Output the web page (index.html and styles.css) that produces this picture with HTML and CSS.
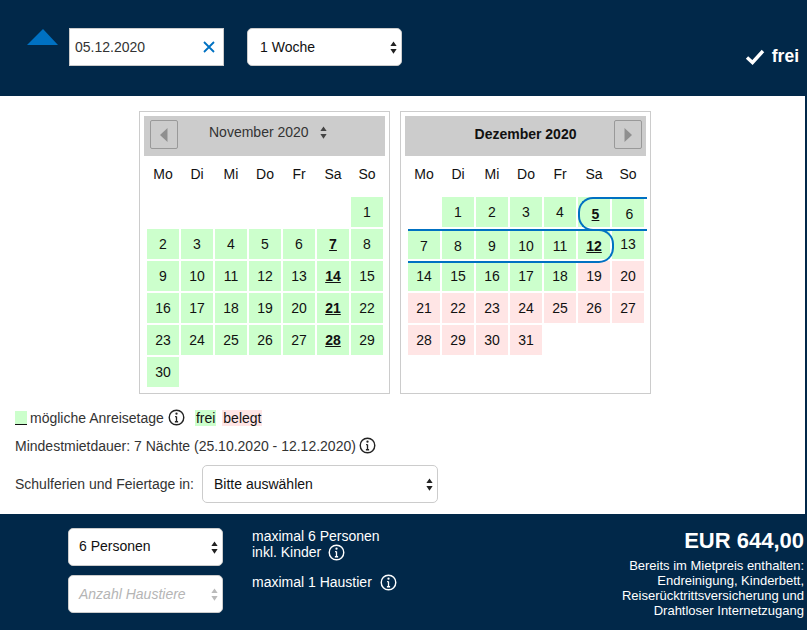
FILE: index.html
```html
<!DOCTYPE html>
<html lang="de">
<head>
<meta charset="utf-8">
<title>Verfügbarkeit</title>
<link rel="stylesheet" href="styles.css">
</head>
<body>
<div class="page">
  <header class="top">
    <span class="triangle"></span>
    <div class="date-field">
      <span>05.12.2020</span>
      <svg class="clear" viewBox="0 0 12 12"><path d="M1 1l10 10M11 1L1 11"/></svg>
    </div>
    <div class="select week"><span>1 Woche</span><svg class="arrows" viewBox="0 0 8 14"><path d="M4 0l3.600 5.400H.4zM4 14L.4 8.600h7.200z"/></svg></div>
    <div class="status">
      <svg class="check" viewBox="0 0 20 16"><path d="M2 8.500l5.500 5L18 2"/></svg>
      <span>frei</span>
    </div>
  </header>

  <main class="content">
    <div class="calendars">
      <section class="cal">
        <div class="cal-head">
          <span class="nav"><svg viewBox="0 0 8 14"><path d="M7.500 0v14L0 7z"/></svg></span>
          <span class="month-select">November 2020<svg class="arrows small" viewBox="0 0 8 14"><path d="M4 0l3.600 5.400H.4zM4 14L.4 8.600h7.200z"/></svg></span>
        </div>
        <div class="grid">
          <div class="dow">Mo</div><div class="dow">Di</div><div class="dow">Mi</div><div class="dow">Do</div><div class="dow">Fr</div><div class="dow">Sa</div><div class="dow">So</div>
          <div></div><div></div><div></div><div></div><div></div><div></div><div class="d f">1</div>
          <div class="d f">2</div><div class="d f">3</div><div class="d f">4</div><div class="d f">5</div><div class="d f">6</div><div class="d f a">7</div><div class="d f">8</div>
          <div class="d f">9</div><div class="d f">10</div><div class="d f">11</div><div class="d f">12</div><div class="d f">13</div><div class="d f a">14</div><div class="d f">15</div>
          <div class="d f">16</div><div class="d f">17</div><div class="d f">18</div><div class="d f">19</div><div class="d f">20</div><div class="d f a">21</div><div class="d f">22</div>
          <div class="d f">23</div><div class="d f">24</div><div class="d f">25</div><div class="d f">26</div><div class="d f">27</div><div class="d f a">28</div><div class="d f">29</div>
          <div class="d f">30</div>
        </div>
      </section>
      <section class="cal">
        <div class="cal-head">
          <span class="month-title">Dezember 2020</span>
          <span class="nav next"><svg viewBox="0 0 8 14"><path d="M.5 0v14L8 7z"/></svg></span>
        </div>
        <div class="grid">
          <div class="dow">Mo</div><div class="dow">Di</div><div class="dow">Mi</div><div class="dow">Do</div><div class="dow">Fr</div><div class="dow">Sa</div><div class="dow">So</div>
          <div></div><div class="d f">1</div><div class="d f">2</div><div class="d f">3</div><div class="d f">4</div><div class="d f a s s1 ra">5</div><div class="d f s s1">6</div>
          <div class="d f s rb">7</div><div class="d f s">8</div><div class="d f s">9</div><div class="d f s">10</div><div class="d f s">11</div><div class="d f a s">12</div><div class="d f">13</div>
          <div class="d f">14</div><div class="d f">15</div><div class="d f">16</div><div class="d f">17</div><div class="d f">18</div><div class="d b">19</div><div class="d b">20</div>
          <div class="d b">21</div><div class="d b">22</div><div class="d b">23</div><div class="d b">24</div><div class="d b">25</div><div class="d b">26</div><div class="d b">27</div>
          <div class="d b">28</div><div class="d b">29</div><div class="d b">30</div><div class="d b">31</div>
        </div>
      </section>
    </div>

    <div class="legend">
      <span class="swatch"></span>
      <span>mögliche Anreisetage</span>
      <svg class="info" viewBox="0 0 18 18"><circle cx="9" cy="9" r="7.700"/><path class="i-bar" d="M9 8v5.500M7.300 13.500h3.400M7.500 8H9"/><circle class="i-dot" cx="9" cy="5" r="1.200"/></svg>
      <span class="tag tag-free">frei</span>
      <span class="tag tag-busy">belegt</span>
    </div>
    <div class="minstay">
      <span>Mindestmietdauer: 7 Nächte (25.10.2020 - 12.12.2020)</span>
      <svg class="info" viewBox="0 0 18 18"><circle cx="9" cy="9" r="7.700"/><path class="i-bar" d="M9 8v5.500M7.300 13.500h3.400M7.500 8H9"/><circle class="i-dot" cx="9" cy="5" r="1.200"/></svg>
    </div>
    <div class="holidays">
      <span>Schulferien und Feiertage in:</span>
      <div class="select holiday"><span>Bitte auswählen</span><svg class="arrows" viewBox="0 0 8 14"><path d="M4 0l3.600 5.400H.4zM4 14L.4 8.600h7.200z"/></svg></div>
    </div>
  </main>

  <footer class="bottom">
    <div class="selects">
      <div class="select persons"><span>6 Personen</span><svg class="arrows" viewBox="0 0 8 14"><path d="M4 0l3.600 5.400H.4zM4 14L.4 8.600h7.200z"/></svg></div>
      <div class="select pets"><span>Anzahl Haustiere</span><svg class="arrows" viewBox="0 0 8 14"><path d="M4 0l3.600 5.400H.4zM4 14L.4 8.600h7.200z"/></svg></div>
    </div>
    <div class="limits">
      <div class="limit-a">maximal 6 Personen<br>inkl. Kinder
        <svg class="info light" viewBox="0 0 18 18"><circle cx="9" cy="9" r="7.700"/><path class="i-bar" d="M9 8v5.500M7.300 13.500h3.400M7.500 8H9"/><circle class="i-dot" cx="9" cy="5" r="1.200"/></svg>
      </div>
      <div class="limit-b">maximal 1 Haustier
        <svg class="info light" viewBox="0 0 18 18"><circle cx="9" cy="9" r="7.700"/><path class="i-bar" d="M9 8v5.500M7.300 13.500h3.400M7.500 8H9"/><circle class="i-dot" cx="9" cy="5" r="1.200"/></svg>
      </div>
    </div>
    <div class="price">
      <div class="amount">EUR 644,00</div>
      <div class="included">Bereits im Mietpreis enthalten:<br>Endreinigung, Kinderbett,<br>Reiserücktrittsversicherung und<br>Drahtloser Internetzugang</div>
    </div>
  </footer>
</div>
</body>
</html>
```

FILE: styles.css
```css
* { box-sizing: border-box; }
html, body { margin: 0; padding: 0; }
body {
  width: 807px;
  height: 630px;
  overflow: hidden;
  background: #012849;
  font-family: "Liberation Sans", Arial, sans-serif;
  font-size: 14px;
  color: #333;
}
.page { width: 807px; height: 630px; display: flex; flex-direction: column; }

.top {
  height: 96px;
  flex: none;
  background: #012849;
  display: flex;
  align-items: flex-start;
  padding: 28px 8px 0 27px;
}
.triangle {
  width: 0;
  height: 0;
  margin: 1px 10px 0 0;
  border-left: 16px solid transparent;
  border-right: 15px solid transparent;
  border-bottom: 16px solid #0071c2;
}
.date-field {
  width: 155px;
  height: 38px;
  margin-left: 1px;
  background: #fff;
  border: 1px solid #ccc;
  display: flex;
  align-items: center;
  justify-content: space-between;
  padding: 0 8px 0 5px;
  color: #333;
}
.clear { width: 12px; height: 12px; fill: none; stroke: #0071c2; stroke-width: 1.800; }

.select {
  background: #fff;
  border: 1px solid #ccc;
  border-radius: 5px;
  height: 38px;
  display: flex;
  align-items: center;
  justify-content: space-between;
  color: #111;
}
.arrows { width: 7px; height: 13px; fill: #222; flex: none; }
.week { width: 155px; margin-left: 23px; padding: 0 4px 0 12px; }
.status {
  margin-left: auto;
  margin-top: 18px;
  display: flex;
  align-items: center;
  gap: 7px;
  color: #fff;
  font-weight: 700;
  font-size: 17.500px;
}
.check { width: 20px; height: 16px; fill: none; stroke: #fff; stroke-width: 3.400; }

.content {
  width: 805px;
  height: 418px;
  flex: none;
  background: #fff;
  padding: 15px 0 0 15px;
}
.calendars { display: flex; gap: 10px; margin-left: 124px; }
.cal {
  width: 251px;
  height: 283px;
  border: 1px solid #ccc;
  padding: 4px;
}
.cal-head {
  height: 40px;
  background: #ccc;
  display: flex;
  align-items: flex-start;
  color: #333;
}
.nav {
  width: 28px;
  height: 29px;
  margin: 4px 0 0 6px;
  border: 1px solid #999;
  border-radius: 2px;
  display: flex;
  align-items: center;
  justify-content: center;
  flex: none;
}
.nav svg { width: 8px; height: 14px; fill: #8f8f8f; }
.nav.next { margin: 4px 4px 0 0; }
.month-select {
  margin: 8px 0 0 31px;
  display: flex;
  align-items: center;
  gap: 11px;
  height: 16px;
  font-size: 14px;
}
.arrows.small { width: 7px; height: 13px; fill: #444; }
.month-title {
  flex: 1;
  text-align: center;
  font-weight: 700;
  color: #111;
  margin-top: 10px;
  padding-left: 32px;
}

.grid {
  display: grid;
  grid-template-columns: repeat(7, 32px);
  grid-template-rows: 39px repeat(6, 30px);
  gap: 2px;
  margin-left: 3px;
  color: #111;
}
.dow { display: flex; align-items: center; justify-content: center; padding-bottom: 3px; }
.d { display: flex; align-items: center; justify-content: center; position: relative; }
.f { background: #ccffcc; }
.b { background: #ffe5e5; }
.a { font-weight: 700; text-decoration: underline; }
.s { padding-top: 4px; }
.s1 { padding-left: 3px; }
.ra::after, .rb::after {
  content: "";
  position: absolute;
  z-index: 1;
  top: 0;
  left: 0;
  height: 30px;
  border: 2px solid #0071c2;
  pointer-events: none;
}
.ra::after {
  width: 67px;
  border-right: 0;
  border-radius: 15px 0 0 15px;
}
.rb::after {
  width: 204px;
  border-left: 0;
  border-radius: 0 15px 15px 0;
}

.legend {
  display: flex;
  align-items: center;
  height: 18px;
  margin-top: 15px;
}
.swatch {
  width: 12px;
  height: 14px;
  background: #ccffcc;
  border-bottom: 1px solid #111;
  margin-right: 3px;
}
.info { width: 17px; height: 17px; fill: none; stroke: #222; stroke-width: 1.500; flex: none; }
.info .i-dot { fill: #222; stroke: none; }
.info .i-bar { stroke-width: 1.400; }
.info.light { stroke: #fff; }
.info.light .i-dot { fill: #fff; }
.legend .info { margin: -2px 10px 0 4px; }
.tag { padding: 0 1px; color: #111; }
.tag-free { background: #ccffcc; margin-right: 7px; }
.tag-busy { background: #ffe5e5; margin-left: -1px; }
.minstay {
  display: flex;
  align-items: center;
  gap: 3px;
  height: 18px;
  margin-top: 10px;
}
.minstay .info { margin-top: -2px; }
.holidays {
  display: flex;
  align-items: center;
  margin-top: 10px;
}
.holiday { width: 236px; margin-left: 8px; padding: 0 4px 0 11px; }

.bottom {
  flex: 1;
  background: #012849;
  display: flex;
  align-items: flex-start;
  color: #fff;
  padding: 14px 3px 0 68px;
}
.selects { display: flex; flex-direction: column; gap: 9px; width: 155px; }
.persons, .pets { width: 155px; padding: 0 4px 0 10px; }
.persons span { margin-bottom: 2px; }
.pets { color: #b5b5b5; font-style: italic; }
.pets .arrows { fill: #bbb; }
.limits { margin-left: 29px; font-size: 14px; line-height: 16px; }
.limits .info { vertical-align: -2px; margin: -4px 0 -2px 3px; }
.limit-b { margin-top: 14px; }
.limits .limit-b .info { margin-left: 4px; }
.price { margin-left: auto; text-align: right; }
.amount { font-size: 22px; font-weight: 700; line-height: 24px; margin-top: 1px; }
.included { font-size: 13px; line-height: 15px; margin-top: 5px; }
```
